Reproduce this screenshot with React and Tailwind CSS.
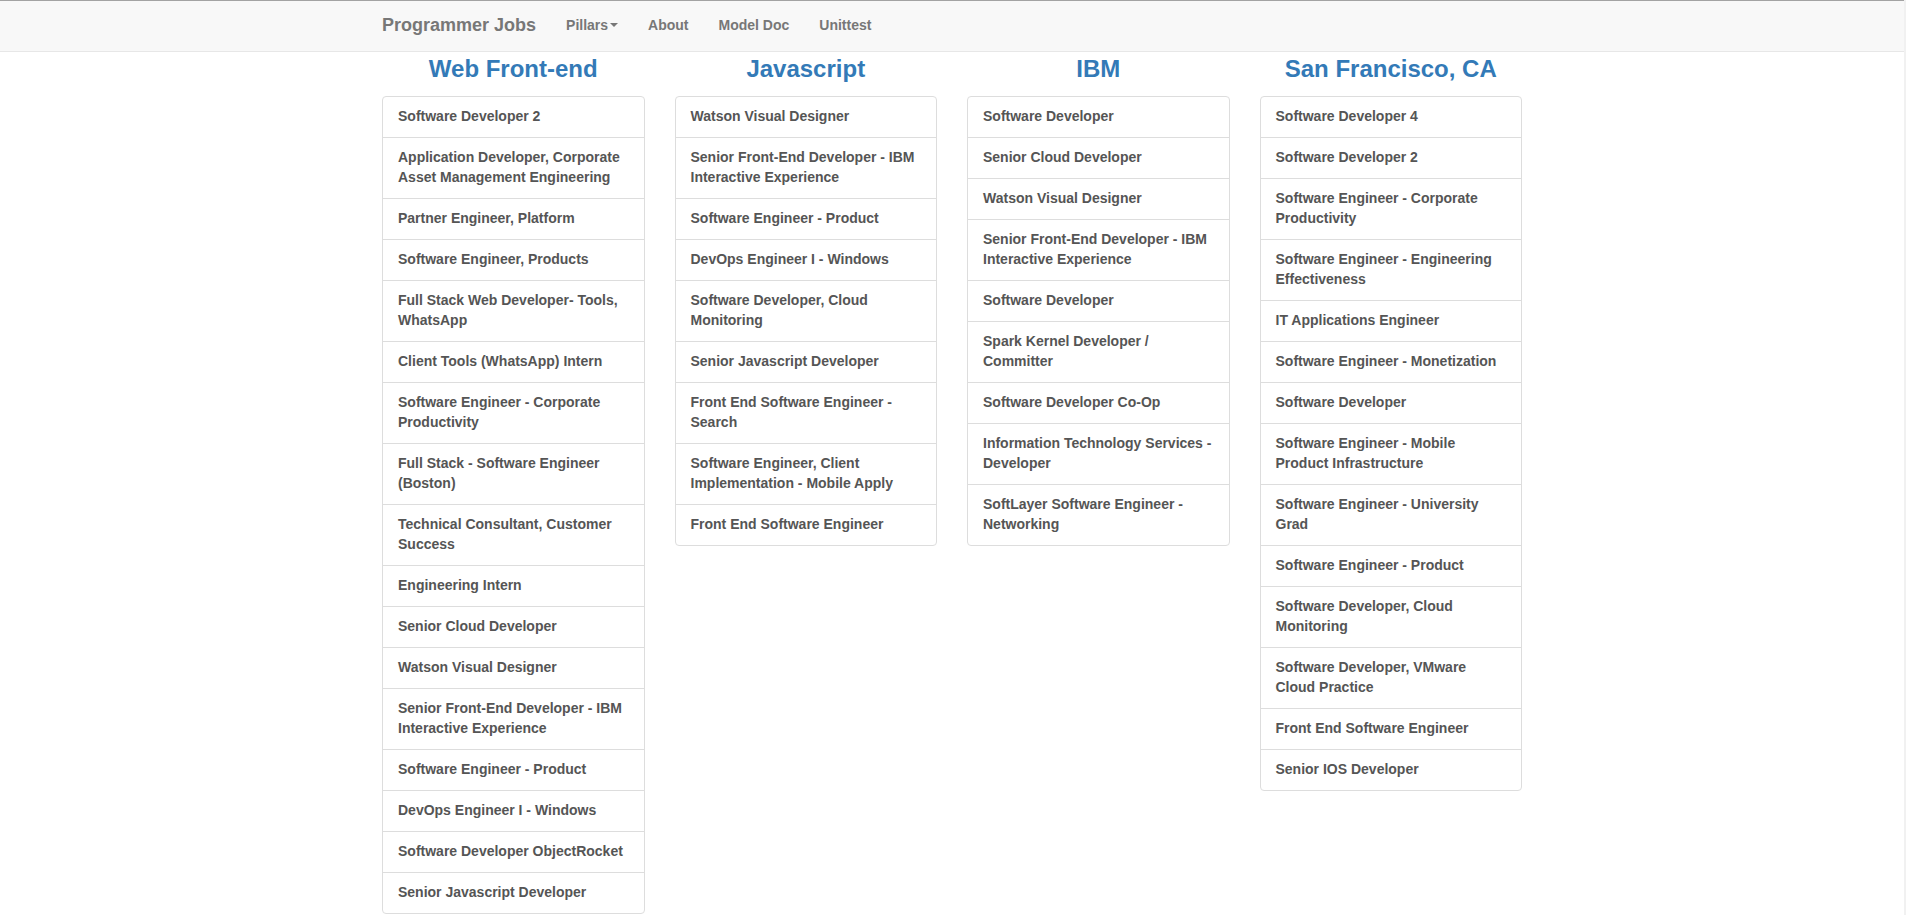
import React from "react";

const columns = [
  {
    title: "Web Front-end",
    items: [
      "Software Developer 2",
      "Application Developer, Corporate Asset Management Engineering",
      "Partner Engineer, Platform",
      "Software Engineer, Products",
      "Full Stack Web Developer- Tools, WhatsApp",
      "Client Tools (WhatsApp) Intern",
      "Software Engineer - Corporate Productivity",
      "Full Stack - Software Engineer (Boston)",
      "Technical Consultant, Customer Success",
      "Engineering Intern",
      "Senior Cloud Developer",
      "Watson Visual Designer",
      "Senior Front-End Developer - IBM Interactive Experience",
      "Software Engineer - Product",
      "DevOps Engineer I - Windows",
      "Software Developer ObjectRocket",
      "Senior Javascript Developer",
    ],
  },
  {
    title: "Javascript",
    items: [
      "Watson Visual Designer",
      "Senior Front-End Developer - IBM Interactive Experience",
      "Software Engineer - Product",
      "DevOps Engineer I - Windows",
      "Software Developer, Cloud Monitoring",
      "Senior Javascript Developer",
      "Front End Software Engineer - Search",
      "Software Engineer, Client Implementation - Mobile Apply",
      "Front End Software Engineer",
    ],
  },
  {
    title: "IBM",
    items: [
      "Software Developer",
      "Senior Cloud Developer",
      "Watson Visual Designer",
      "Senior Front-End Developer - IBM Interactive Experience",
      "Software Developer",
      "Spark Kernel Developer / Committer",
      "Software Developer Co-Op",
      "Information Technology Services - Developer",
      "SoftLayer Software Engineer - Networking",
    ],
  },
  {
    title: "San Francisco, CA",
    items: [
      "Software Developer 4",
      "Software Developer 2",
      "Software Engineer - Corporate Productivity",
      "Software Engineer - Engineering Effectiveness",
      "IT Applications Engineer",
      "Software Engineer - Monetization",
      "Software Developer",
      "Software Engineer - Mobile Product Infrastructure",
      "Software Engineer - University Grad",
      "Software Engineer - Product",
      "Software Developer, Cloud Monitoring",
      "Software Developer, VMware Cloud Practice",
      "Front End Software Engineer",
      "Senior IOS Developer",
    ],
  },
];

export default function App() {
  return (
    <div
      className="flex min-h-[915px] bg-white font-bold text-[14px]"
      style={{ fontFamily: '"Liberation Sans", Arial, Helvetica, sans-serif' }}
    >
      <div className="flex-1 min-w-0">
        <nav className="bg-[#f8f8f8] border-t border-t-[#a3a3a3] border-b border-b-[#e7e7e7]">
          <div className="w-[1170px] mx-auto flex items-start h-[50px]">
            <a className="px-[15px] pt-[14px] pb-[16px] text-[18px] leading-[20px] text-[#777]">
              Programmer Jobs
            </a>
            <ul className="flex">
              <li>
                <a className="flex items-center px-[15px] pt-[14px] pb-[16px] leading-[20px] text-[#777]">
                  Pillars
                  <span className="ml-[2px] inline-block w-0 h-0 border-t-[4px] border-t-[#777] border-x-[4px] border-x-transparent" />
                </a>
              </li>
              <li>
                <a className="block px-[15px] pt-[14px] pb-[16px] leading-[20px] text-[#777]">About</a>
              </li>
              <li>
                <a className="block px-[15px] pt-[14px] pb-[16px] leading-[20px] text-[#777]">Model Doc</a>
              </li>
              <li>
                <a className="block px-[15px] pt-[14px] pb-[16px] leading-[20px] text-[#777]">Unittest</a>
              </li>
            </ul>
          </div>
        </nav>
        <div className="w-[1170px] mx-auto grid grid-cols-4">
          {columns.map((col) => (
            <div key={col.title} className="px-[15px]">
              <h3 className="text-center text-[24px] leading-[26px] font-bold text-[#337ab7] mt-[4px] mb-[14px]">
                {col.title}
              </h3>
              <ul className="border border-[#ddd] rounded-[4px] divide-y divide-[#ddd]">
                {col.items.map((it, i) => (
                  <li key={i} className="px-[15px] pt-[9px] pb-[11px] leading-[20px] text-[#555]">
                    {it}
                  </li>
                ))}
              </ul>
            </div>
          ))}
        </div>
      </div>
      <div className="w-[2px] bg-[#f1f1f1]" />
    </div>
  );
}
